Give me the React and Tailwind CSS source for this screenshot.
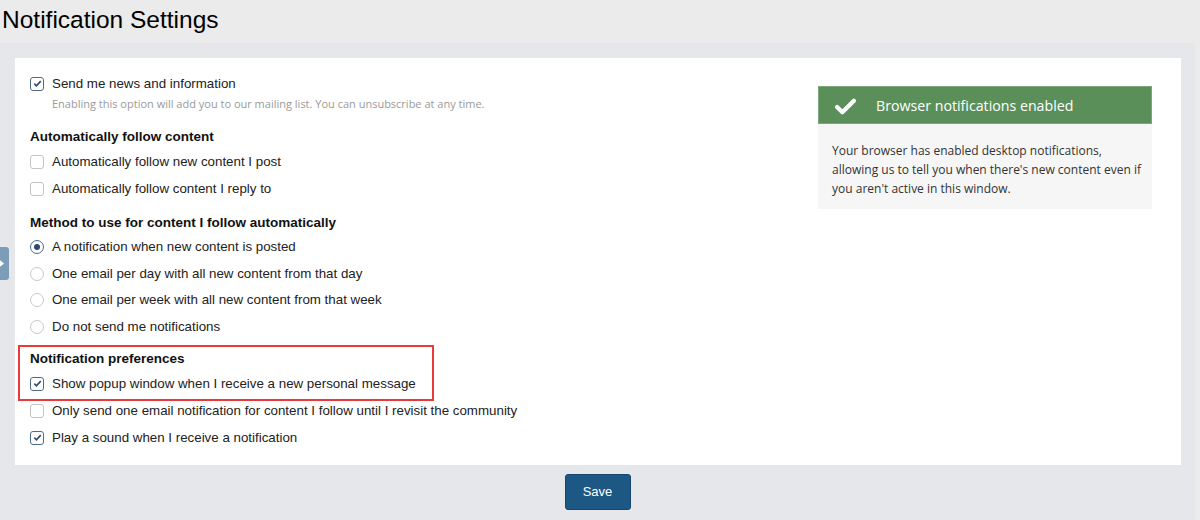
import { useState } from "react";

const arial = { fontFamily: '"Liberation Sans", Arial, sans-serif' };
const segoe = { fontFamily: '"Open Sans", "Noto Sans", sans-serif' };

const CheckBox = ({ checked }) => (
  <span
    className={
      "w-[14px] h-[14px] rounded-[3px] border flex items-center justify-center shrink-0 bg-white " +
      (checked ? "border-[#4e6b8c]" : "border-[#c4c4c4]")
    }
  >
    {checked && (
      <svg viewBox="0 0 10 10" className="w-[9px] h-[9px]">
        <path d="M1.5 5.2l2.3 2.3L8.6 2.4" fill="none" stroke="#2c4a6e" strokeWidth="1.8" />
      </svg>
    )}
  </span>
);

const Radio = ({ checked }) => (
  <span
    className={
      "w-[14px] h-[14px] rounded-full border flex items-center justify-center shrink-0 bg-white " +
      (checked ? "border-[#4e6b8c]" : "border-[#c8c8c8]")
    }
  >
    {checked && <span className="w-[6px] h-[6px] rounded-full bg-[#2c4a6e]" />}
  </span>
);

const Row = ({ children, control }) => (
  <label className="flex items-center gap-[8px] h-[27px] text-[13.33px] text-[#222]" style={arial}>
    {control}
    <span>{children}</span>
  </label>
);

const RadioRow = ({ children, checked }) => (
  <label className="flex items-center gap-[8px] h-[26.5px] text-[13.33px] text-[#222]" style={arial}>
    <Radio checked={checked} />
    <span>{children}</span>
  </label>
);

const Heading = ({ children }) => (
  <div className="text-[13.5px] font-bold text-[#111] h-[21px] flex items-center" style={arial}>
    {children}
  </div>
);

export default function App() {
  const [method] = useState("notify");
  return (
    <div className="w-[1200px] h-[520px] bg-[#ebebeb] overflow-hidden relative">
      <h1 className="text-[24.5px] text-black pl-[2px] h-[43px] flex items-center pb-[2px]" style={arial}>
        Notification Settings
      </h1>

      <div className="w-[1195px] h-[477px] bg-[#e6e7eb] pt-[15px] px-[15px]">
        <div className="bg-white h-[407px] w-[1166px] flex pl-[15px] pt-[12px]">
          <div className="w-[600px]">
            <Row control={<CheckBox checked />}>Send me news and information</Row>
            <div className="text-[11px] leading-[14px] text-[#9a9a9a] pl-[22px] h-[14px]" style={segoe}>
              Enabling this option will add you to our mailing list. You can unsubscribe at any time.
            </div>

            <div className="mt-[16px]">
              <Heading>Automatically follow content</Heading>
              <Row control={<CheckBox />}>Automatically follow new content I post</Row>
              <Row control={<CheckBox />}>Automatically follow content I reply to</Row>
            </div>

            <div className="mt-[11px]">
              <Heading>Method to use for content I follow automatically</Heading>
              <RadioRow checked={method === "notify"}>A notification when new content is posted</RadioRow>
              <RadioRow>One email per day with all new content from that day</RadioRow>
              <RadioRow>One email per week with all new content from that week</RadioRow>
              <RadioRow>Do not send me notifications</RadioRow>
            </div>

            <div className="mt-[9px] relative">
              <div className="absolute left-[-12px] top-[-4px] w-[416px] h-[56px] border-2 border-[#e8393d] pointer-events-none" />
              <Heading>Notification preferences</Heading>
              <Row control={<CheckBox checked />}>Show popup window when I receive a new personal message</Row>
              <Row control={<CheckBox />}>Only send one email notification for content I follow until I revisit the community</Row>
              <Row control={<CheckBox checked />}>Play a sound when I receive a notification</Row>
            </div>
          </div>

          <div className="ml-[188px] mt-[16px] w-[334px] self-start" style={segoe}>
            <div className="bg-[#5a8f5a] h-[38px] flex items-center text-white border border-[#7aa87a] pt-[2px]">
              <svg viewBox="0 0 20 16" className="w-[21px] h-[17px] ml-[16px]">
                <path d="M2 8.5l5 5L18 2.5" fill="none" stroke="white" strokeWidth="4" strokeLinecap="round" strokeLinejoin="round" />
              </svg>
              <span className="ml-[20px] text-[14.2px]">Browser notifications enabled</span>
            </div>
            <div className="bg-[#f6f6f6] pl-[14px] pr-[8px] pt-[17px] pb-[11px] text-[12px] leading-[19px] text-[#333]">
              Your browser has enabled desktop notifications, allowing us to tell you when there's new content even if you aren't active in this window.
            </div>
          </div>
        </div>

        <div className="flex justify-center mt-[9px]">
          <button
            className="w-[66px] h-[36px] rounded-[3px] bg-[#1d5784] border border-[#154870] text-white text-[13px]"
            style={arial}
          >
            Save
          </button>
        </div>
      </div>

      <div className="absolute left-0 top-[247px] w-[9px] h-[33px] bg-[#7d9cb7] rounded-r-[3px] flex items-center">
        <svg viewBox="0 0 6 8" className="w-[5px] h-[7px]">
          <path d="M0 0l5 4-5 4z" fill="white" />
        </svg>
      </div>
    </div>
  );
}
